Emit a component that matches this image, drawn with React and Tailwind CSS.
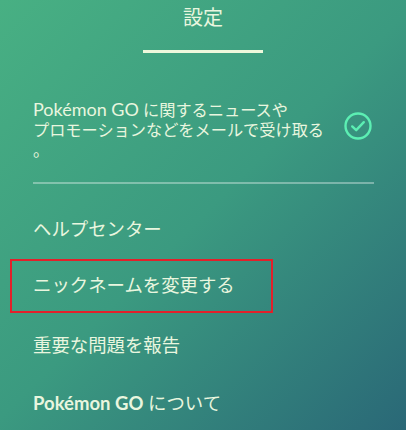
import React from 'react'

const CheckCircle = () => (
  <svg width="28" height="28" viewBox="0 0 28 28" fill="none">
    <circle cx="14" cy="14" r="12.5" stroke="#5cefb3" strokeWidth="2.4" />
    <path d="M8.2 14.4 L12.2 18.2 L19.8 10.2" stroke="#5cefb3" strokeWidth="2.4" strokeLinecap="round" strokeLinejoin="round" />
  </svg>
)

const MenuItem = ({ children }) => (
  <div className="flex h-[58px] items-center pl-[33px] text-[18.4px]">{children}</div>
)

export default function App() {
  return (
    <div className="w-[406px] h-[430px] overflow-hidden bg-[linear-gradient(135deg,#48b083_0%,#3b9a80_50%,#2a6877_100%)] text-[#e9f6df] font-[family-name:Lato,'Noto_Sans_CJK_JP',sans-serif]">
      <div className="pt-[3px] text-center text-[20px] leading-[28px]">設定</div>
      <div className="mx-auto mt-[19px] h-[3px] w-[120px] bg-[#eef8dc]" />

      <div className="mt-[46px] flex items-start pl-[33px] pr-[34px]">
        <div className="text-[16.2px] leading-[20px] whitespace-nowrap">
          <div>
            <span className="text-[18px]">Pokémon GO</span> に関するニュースや
          </div>
          <div>プロモーションなどをメールで受け取る</div>
          <div>。</div>
        </div>
        <div className="ml-auto mt-[13px]">
          <CheckCircle />
        </div>
      </div>

      <div className="ml-[33px] mt-[22px] h-[2px] w-[341px] bg-white/35" />

      <div className="mt-[17px]">
        <MenuItem>ヘルプセンター</MenuItem>
        <div className="h-[58px]">
          <div className="ml-[10px] flex h-[54px] w-[263px] items-center border-2 border-[#e3202a] pl-[21px] text-[18.4px]">
            ニックネームを変更する
          </div>
        </div>
        <MenuItem>重要な問題を報告</MenuItem>
        <MenuItem>
          <span className="text-[18.5px] font-bold">Pokémon GO</span>
          <span>&nbsp;について</span>
        </MenuItem>
      </div>
    </div>
  )
}
